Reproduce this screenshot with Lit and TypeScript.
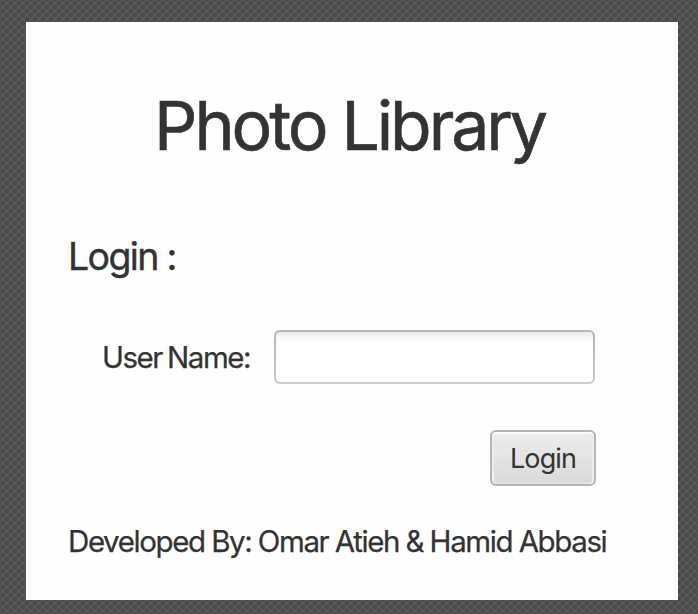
import { LitElement, html, css } from "lit";
import { customElement } from "lit/decorators.js";

@customElement("app-root")
export class AppRoot extends LitElement {
  static styles = css`
    :host {
      display: block;
      box-sizing: border-box;
      width: 698px;
      height: 614px;
      padding: 22px 20px 14px 26px;
      font-family: Inter, "Liberation Sans", sans-serif;
      color: #333;
      background-color: #5a5a5a;
      background-image: radial-gradient(circle at center, #484848 0 1.4px, transparent 3.2px),
        radial-gradient(circle at center, #484848 0 1.4px, transparent 3.2px);
      background-size: 8px 8px;
      background-position: -1px -1px, 3px 3px;
      overflow: hidden;
    }
    .panel {
      box-sizing: border-box;
      height: 578px;
      padding: 64px 83px 0 42px;
      background: #fefefe;
      display: flex;
      flex-direction: column;
      white-space: nowrap;
    }
    h1, h2, p { margin: 0; font-weight: 400; }
    h1, h2, p, label { -webkit-text-stroke: 0.25px #333; }
    h1 {
      align-self: center;
      margin-left: 36px;
      font-size: 68px;
      line-height: 78px;
      letter-spacing: -3.1px;
      -webkit-text-stroke-width: 0.6px;
    }
    h2 {
      margin-top: 68px;
      font-size: 37.5px;
      line-height: 50px;
      letter-spacing: -1.65px;
      -webkit-text-stroke-width: 0.4px;
    }
    .row {
      display: flex;
      align-items: center;
      justify-content: space-between;
      margin: 48px 0 0 34px;
    }
    label { font-size: 29.5px; line-height: 54px; letter-spacing: -1.5px; word-spacing: -1.5px; }
    input {
      box-sizing: border-box;
      width: 321px;
      height: 54px;
      padding: 0 12px;
      border: 2px solid transparent;
      border-radius: 6px;
      outline: none;
      font: inherit;
      font-size: 26px;
      background: linear-gradient(#ececec, #fff 10px) padding-box,
        linear-gradient(#b5b5b5, #cbcbcb) border-box;
    }
    button {
      box-sizing: border-box;
      align-self: flex-end;
      width: 106px;
      height: 56px;
      margin: 46px -1px 0 0;
      padding: 0;
      border: 2px solid #b5b5b5;
      border-radius: 6px;
      font: inherit;
      font-size: 27px;
      letter-spacing: -0.9px;
      color: #333;
      background: linear-gradient(#ededed, #d9d9d9) padding-box;
      box-shadow: inset 0 2px #fbfbfb, inset 2px 0 #eee, inset -2px 0 #eee, inset 0 -2px #e2e2e2;
    }
    p { margin-top: 35px; font-size: 29.5px; line-height: 40px; letter-spacing: -1.4px; word-spacing: -0.4px; }
  `;

  render() {
    return html`
      <main class="panel">
        <h1>Photo Library</h1>
        <h2>Login :</h2>
        <div class="row">
          <label for="user">User Name:</label>
          <input id="user" type="text" />
        </div>
        <button>Login</button>
        <p>Developed By: Omar Atieh &amp; Hamid Abbasi</p>
      </main>
    `;
  }
}
